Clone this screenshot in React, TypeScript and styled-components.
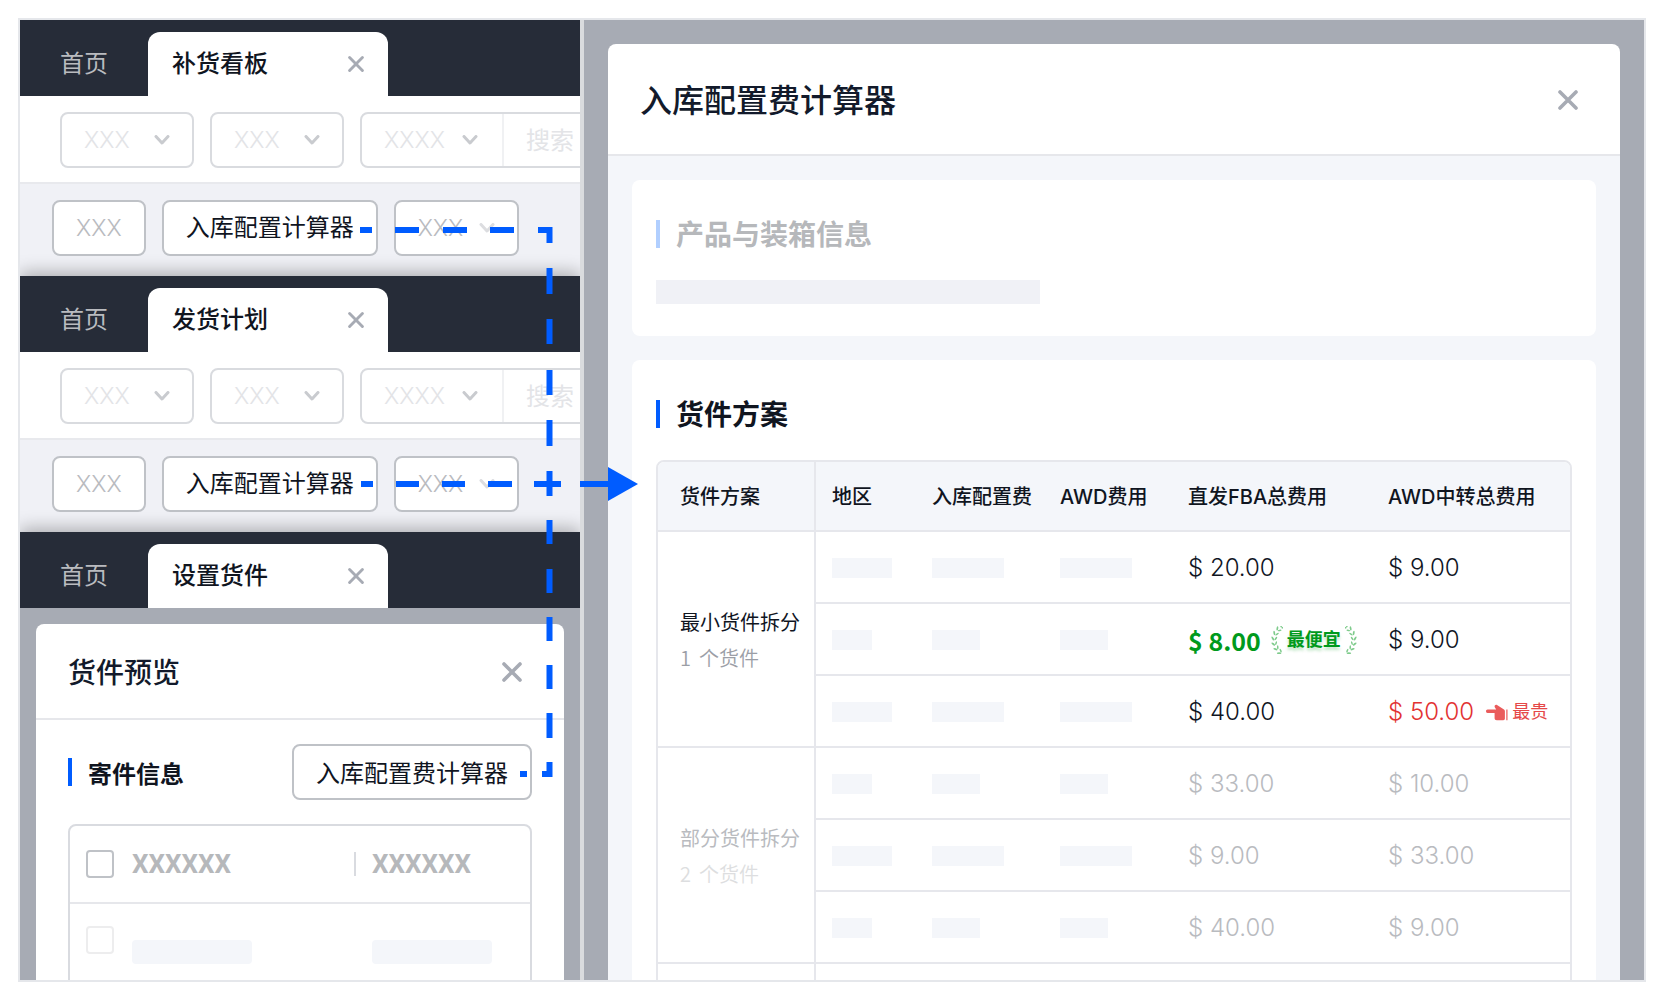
import React from 'react';
import styled, { createGlobalStyle } from 'styled-components';

const cjk = '"Noto Sans CJK SC", sans-serif';
const inter = `Inter, ${cjk}`;
const roboto = `Roboto, ${cjk}`;

const GlobalStyle = createGlobalStyle`
  *, *::before, *::after { box-sizing: border-box; }
  body { margin: 0; background: #fff; color: #10151f; font-family: ${inter}; line-height: 32px; }
  button, input, select { font: inherit; color: inherit; margin: 0; }
  h2, h3, p { margin: 0; }
`;

const Page = styled.div`
  height: 100vh;
  padding: 18px;
`;

const Frame = styled.main`
  position: relative;
  display: flex;
  height: 100%;
  border: 2px solid #e5e7eb;
  overflow: hidden;
`;

const EntryColumn = styled.section`
  display: flex;
  flex: 0 0 560px;
  flex-direction: column;
  overflow: hidden;
`;

const Divider = styled.div`
  flex: 0 0 4px;
  background: #d9dbde;
`;

const Screen = styled.article<{ $fill?: boolean }>`
  display: flex;
  flex: ${(p) => (p.$fill ? '1 0 auto' : 'none')};
  flex-direction: column;
  background: #a7abb4;
  box-shadow: 0 -4px 16px rgba(0, 0, 0, 0.28);
`;

const TabBar = styled.nav`
  display: flex;
  align-items: flex-end;
  height: 76px;
  background: #262c38;
`;

const HomeTab = styled.a`
  width: 128px;
  padding-left: 40px;
  color: #b9bbbf;
  font-size: 24px;
  line-height: 64px;
  text-decoration: none;
`;

const ActiveTab = styled.div`
  display: flex;
  align-items: center;
  justify-content: space-between;
  width: 240px;
  height: 64px;
  padding: 0 24px;
  border-radius: 12px 12px 0 0;
  background: #fff;
  font-size: 24px;
  font-weight: 500;
`;

const IconButton = styled.button`
  display: flex;
  padding: 0;
  border: 0;
  background: none;
  color: #a7abb4;
`;

const FilterBar = styled.div`
  display: flex;
  gap: 16px;
  height: 88px;
  padding: 16px 0 0 40px;
  border-bottom: 2px solid #e8e9ed;
  background: #fff;
  overflow: hidden;
`;

const SelectBox = styled.div<{ $joined?: boolean }>`
  display: flex;
  flex: none;
  align-items: center;
  width: ${(p) => (p.$joined ? 142 : 134)}px;
  height: ${(p) => (p.$joined ? 52 : 56)}px;
  padding-right: ${(p) => (p.$joined ? 24 : 22)}px;
  border: ${(p) => (p.$joined ? '0' : '2px solid #d9dbdf')};
  border-right: ${(p) => (p.$joined ? '2px solid #f0f1f3' : '')};
  border-radius: ${(p) => (p.$joined ? 0 : 8)}px;
  color: #c9cbcf;
`;

const Select = styled.select`
  flex: 1;
  min-width: 0;
  height: 100%;
  padding: 0 0 0 22px;
  border: 0;
  background: none;
  appearance: none;
  color: #e3e4e7;
  font-size: 23px;
  font-weight: 300;
`;

const SearchGroup = styled.div`
  display: flex;
  flex: none;
  width: 320px;
  height: 56px;
  border: 2px solid #d9dbdf;
  border-radius: 8px;
`;

const SearchInput = styled.input`
  width: 160px;
  height: 52px;
  padding: 0 22px;
  border: 0;
  background: none;
  font-size: 24px;
  &::placeholder { color: #e3e4e7; opacity: 1; }
`;

const ActionBar = styled.div`
  display: flex;
  gap: 16px;
  height: 92px;
  padding: 16px 32px 0;
  background: #f0f1f6;
`;

const OutlineButton = styled.button<{ $muted?: boolean }>`
  display: flex;
  flex: none;
  align-items: center;
  gap: 16px;
  height: 56px;
  padding: 0 22px;
  border: 2px solid #bfc2c7;
  border-radius: 8px;
  background: #fff;
  color: ${(p) => (p.$muted ? '#b9bbbf' : '#10151f')};
  font-size: ${(p) => (p.$muted ? 23 : 24)}px;
  font-weight: ${(p) => (p.$muted ? 300 : 400)};
  white-space: nowrap;
  svg { color: #dcdde0; }
`;

const PreviewModal = styled.div`
  flex: 1;
  margin: 16px 16px 0;
  border-radius: 8px 8px 0 0;
  background: #fff;
`;

const ModalHeader = styled.header<{ $large?: boolean }>`
  display: flex;
  align-items: center;
  justify-content: space-between;
  height: ${(p) => (p.$large ? 112 : 96)}px;
  padding: 2px 42px 0 32px;
  border-bottom: 2px solid #e6e7eb;
`;

const ModalTitle = styled.h2<{ $large?: boolean }>`
  padding-top: 2px;
  color: #121a2b;
  font-size: ${(p) => (p.$large ? 32 : 28)}px;
  font-weight: 500;
`;

const PreviewBody = styled.div`
  padding: 24px 32px 0;
  font-family: ${cjk};
`;

const SectionRow = styled.div`
  display: flex;
  align-items: center;
  justify-content: space-between;
  margin-bottom: 24px;
`;

const SectionTitle = styled.h3<{ $size?: number; $muted?: boolean }>`
  height: 28px;
  padding-left: 16px;
  border-left: 4px solid ${(p) => (p.$muted ? '#b1cfff' : '#005cff')};
  color: ${(p) => (p.$muted ? '#b6b8bb' : '#10151f')};
  font-size: ${(p) => p.$size ?? 28}px;
  font-weight: 700;
  line-height: 30px;
`;

const ShipmentTable = styled.div`
  border: 2px solid #d9dbe0;
  border-radius: 8px;
  overflow: hidden;
  table { width: 100%; border-collapse: separate; border-spacing: 0; table-layout: fixed; }
  th, td { padding: 0; text-align: left; }
  th { height: 78px; border-bottom: 2px solid #e6e7eb; color: #b6b8bb; font-family: ${roboto}; font-size: 26px; font-weight: 700; }
  td { height: 96px; vertical-align: top; }
  th:first-child, td:first-child { width: 62px; padding-left: 16px; }
  th:nth-child(2) { width: 222px; }
  td:first-child { padding-top: 22px; }
  td:nth-child(n + 2) { padding-top: 36px; }
  td:last-child { padding-left: 18px; }
`;

const SplitHeading = styled.div`
  height: 24px;
  padding-left: 16px;
  border-left: 2px solid #d9dbe0;
  line-height: 24px;
`;

const Checkbox = styled.input<{ $faint?: boolean }>`
  display: block;
  width: 28px;
  height: 28px;
  border: 2px solid ${(p) => (p.$faint ? '#ededee' : '#bfc2c7')};
  border-radius: 4px;
  background: #fff;
  appearance: none;
`;

const Skeleton = styled.div<{ $w: number; $h?: number; $r?: number; $dark?: boolean }>`
  width: ${(p) => p.$w}px;
  height: ${(p) => p.$h ?? 20}px;
  border-radius: ${(p) => p.$r ?? 0}px;
  background: ${(p) => (p.$dark ? '#f0f1f6' : '#f4f6fa')};
`;

const CalculatorPane = styled.section`
  display: flex;
  flex: 1;
  min-width: 0;
  padding: 24px 24px 0;
  background: #a7abb4;
`;

const Calculator = styled.div`
  flex: 1;
  min-width: 0;
  border-radius: 8px 8px 0 0;
  background: #fff;
`;

const CalculatorBody = styled.div`
  display: flex;
  flex-direction: column;
  gap: 24px;
  padding: 24px;
  background: #f4f6fa;
`;

const Card = styled.section`
  display: flex;
  flex-direction: column;
  gap: 32px;
  padding: 40px 24px 32px;
  border-radius: 8px;
  background: #fff;
`;

const line = '2px solid #e6e7ec';

const PlanTable = styled.div`
  border: ${line};
  border-radius: 8px;
  overflow: hidden;
  table { width: 100%; border-collapse: separate; border-spacing: 0; table-layout: fixed; }
  th, td { height: 72px; padding: 2px 0 0 16px; border-bottom: ${line}; text-align: left; white-space: nowrap; }
  thead th { height: 70px; background: #f4f6fa; font-size: 20px; font-weight: 500; }
  th:first-child { padding-left: 22px; border-right: ${line}; }
  td { font-size: 24px; font-weight: 300; }
`;

const Plan = styled.p<{ $muted: boolean }>`
  color: ${(p) => (p.$muted ? '#b9bbbf' : '#10151f')};
  font-family: ${cjk};
  font-size: 20px;
  font-weight: 400;
  line-height: 36px;
`;

const PlanCount = styled(Plan)`
  display: flex;
  gap: 8px;
  color: ${(p) => (p.$muted ? '#dddee0' : '#9b9ea6')};
  font-weight: 350;
`;

type Tone = 'normal' | 'muted' | 'best' | 'worst';
const tones: Record<Tone, string> = { normal: '#10151f', muted: '#b9bbbf', best: '#009a1c', worst: '#e23232' };

const Price = styled.div<{ $tone: Tone }>`
  display: flex;
  align-items: center;
  gap: ${(p) => (p.$tone === 'best' ? 10 : 12)}px;
  color: ${(p) => tones[p.$tone]};
  font-family: ${(p) => (p.$tone === 'best' ? cjk : inter)};
  font-size: ${(p) => (p.$tone === 'best' ? 25 : 24)}px;
  font-weight: ${(p) => (p.$tone === 'best' ? 700 : 300)};
`;

const BestTag = styled.span`
  display: flex;
  align-items: center;
  gap: 4px;
  font-family: ${inter};
  font-size: 18px;
  font-weight: 700;
  text-shadow: 0 3px 3px rgba(0, 154, 28, 0.25);
`;

const WorstTag = styled.span`
  display: flex;
  align-items: center;
  gap: 4px;
  color: #e54848;
  font-size: 18px;
  font-weight: 400;
`;

const Connector = styled.svg`
  position: absolute;
  top: 0;
  left: 0;
  pointer-events: none;
`;

function CloseIcon({ size }: { size: number }) {
  return (
    <svg width={size} height={size} viewBox="0 0 20 20" fill="none" stroke="currentColor" strokeWidth={3.6} strokeLinecap="round">
      <path d="M2 2 18 18M18 2 2 18" />
    </svg>
  );
}

function Chevron() {
  return (
    <svg width="16" height="10" viewBox="0 0 16 10" fill="none" stroke="currentColor" strokeWidth="3" strokeLinecap="round" strokeLinejoin="round">
      <path d="M2 1.5 8 8 14 1.5" />
    </svg>
  );
}

const leafAngles = [-62, -42, -22, -2, 18, 38, 58];

function Laurel({ flip }: { flip?: boolean }) {
  return (
    <svg width="12" height="28" viewBox="0 0 12 28" fill="#7fcb8c">
      <g transform={flip ? 'matrix(-1 0 0 1 12 0)' : undefined}>
        {leafAngles.map((a) => {
          const r = (a * Math.PI) / 180;
          const x = 17 - 13.5 * Math.cos(r);
          const y = 14 + 14.5 * Math.sin(r);
          return (
            <g key={a} transform={`translate(${x} ${y}) rotate(${-a})`}>
              <ellipse cx="-1.7" cy="-1" rx="0.9" ry="2.2" transform="rotate(-32 -1.7 -1)" />
              <ellipse cx="1.3" cy="-1" rx="0.8" ry="2" transform="rotate(35 1.3 -1)" />
            </g>
          );
        })}
      </g>
    </svg>
  );
}

function HandIcon() {
  return (
    <svg width="22" height="17" viewBox="0 0 22 17" fill="#ea5b5b">
      <path d="M1.6 5.6h8.6L8.8 3.2C8 1.7 9.5 0 11 1l7 4.6c.6.4.9.9.9 1.5v7.5c0 1-.6 1.6-1.6 1.6h-6.5c-1.4 0-2.2-.7-2.2-1.9V9H1.6C-.5 9-.5 5.6 1.6 5.6Z" />
      <path d="M20.3 5.4h1.2v10.8h-1.2z" />
    </svg>
  );
}

function TabHeader({ title }: { title: string }) {
  return (
    <TabBar>
      <HomeTab href="#home">首页</HomeTab>
      <ActiveTab>
        {title}
        <IconButton aria-label={`关闭${title}`}><CloseIcon size={16} /></IconButton>
      </ActiveTab>
    </TabBar>
  );
}

function FilterSelect({ text, joined }: { text: string; joined?: boolean }) {
  return (
    <SelectBox $joined={joined}>
      <Select aria-label={text}><option>{text}</option></Select>
      <Chevron />
    </SelectBox>
  );
}

function ListScreen({ title }: { title: string }) {
  return (
    <Screen>
      <TabHeader title={title} />
      <FilterBar>
        <FilterSelect text="XXX" />
        <FilterSelect text="XXX" />
        <SearchGroup>
          <FilterSelect text="XXXX" joined />
          <SearchInput aria-label="搜索" placeholder="搜索" />
        </SearchGroup>
      </FilterBar>
      <ActionBar>
        <OutlineButton $muted>XXX</OutlineButton>
        <OutlineButton>入库配置计算器</OutlineButton>
        <OutlineButton $muted>XXX<Chevron /></OutlineButton>
      </ActionBar>
    </Screen>
  );
}

function ShipmentScreen() {
  return (
    <Screen $fill>
      <TabHeader title="设置货件" />
      <PreviewModal>
        <ModalHeader>
          <ModalTitle>货件预览</ModalTitle>
          <IconButton aria-label="关闭"><CloseIcon size={20} /></IconButton>
        </ModalHeader>
        <PreviewBody>
          <SectionRow>
            <SectionTitle $size={24}>寄件信息</SectionTitle>
            <OutlineButton>入库配置费计算器</OutlineButton>
          </SectionRow>
          <ShipmentTable>
            <table>
              <thead>
                <tr>
                  <th><Checkbox type="checkbox" aria-label="全选" /></th>
                  <th>XXXXXX</th>
                  <th><SplitHeading>XXXXXX</SplitHeading></th>
                </tr>
              </thead>
              <tbody>
                <tr>
                  <td><Checkbox type="checkbox" aria-label="选择" $faint /></td>
                  <td><Skeleton $w={120} $h={24} $r={4} /></td>
                  <td><Skeleton $w={120} $h={24} $r={4} /></td>
                </tr>
              </tbody>
            </table>
          </ShipmentTable>
        </PreviewBody>
      </PreviewModal>
    </Screen>
  );
}

interface PlanRow { wide: boolean; fba: string; awd: string; best?: boolean; worst?: boolean }
interface PlanGroup { name: string; count: number; muted: boolean; rows: PlanRow[] }

const groups: PlanGroup[] = [
  {
    name: '最小货件拆分', count: 1, muted: false,
    rows: [
      { wide: true, fba: '$ 20.00', awd: '$ 9.00' },
      { wide: false, fba: '$ 8.00', awd: '$ 9.00', best: true },
      { wide: true, fba: '$ 40.00', awd: '$ 50.00', worst: true },
    ],
  },
  {
    name: '部分货件拆分', count: 2, muted: true,
    rows: [
      { wide: false, fba: '$ 33.00', awd: '$ 10.00' },
      { wide: true, fba: '$ 9.00', awd: '$ 33.00' },
      { wide: false, fba: '$ 40.00', awd: '$ 9.00' },
    ],
  },
];

function PlanRows({ group }: { group: PlanGroup }) {
  const base: Tone = group.muted ? 'muted' : 'normal';
  return (
    <tbody>
      {group.rows.map((row, i) => (
        <tr key={i}>
          {i === 0 && (
            <th scope="rowgroup" rowSpan={3}>
              <Plan $muted={group.muted}>{group.name}</Plan>
              <PlanCount $muted={group.muted}><span>{group.count}</span> <span>个货件</span></PlanCount>
            </th>
          )}
          <td><Skeleton $w={row.wide ? 60 : 40} /></td>
          <td><Skeleton $w={row.wide ? 72 : 48} /></td>
          <td><Skeleton $w={row.wide ? 72 : 48} /></td>
          <td>
            <Price $tone={row.best ? 'best' : base}>
              {row.fba}
              {row.best && <BestTag><Laurel />最便宜<Laurel flip /></BestTag>}
            </Price>
          </td>
          <td>
            <Price $tone={row.worst ? 'worst' : base}>
              {row.awd}
              {row.worst && <WorstTag><HandIcon />最贵</WorstTag>}
            </Price>
          </td>
        </tr>
      ))}
    </tbody>
  );
}

function FlowConnector() {
  return (
    <Connector width="640" height="780" fill="none" stroke="#005cff" strokeWidth="6" aria-hidden="true">
      <path d="M340 210h12M375 210h24M423 210h24M470 210h24M518 210h11.5v13" />
      <path d="M529.5 248v26M529.5 299v25M529.5 350v25M529.5 400v26M529.5 451v25M529.5 500v24M529.5 549v24M529.5 597v24M529.5 645v24M529.5 693v25M529.5 742v12h-7.5M507 754h-7" />
      <path d="M341 464h12M376 464h23M422 464h23M468 464h24M514 464h27M560 464h28" />
      <path d="M588 447 618 464 588 481Z" fill="#005cff" stroke="none" />
    </Connector>
  );
}

export default function App() {
  return (
    <>
      <GlobalStyle />
      <Page>
        <Frame>
          <EntryColumn>
            <ListScreen title="补货看板" />
            <ListScreen title="发货计划" />
            <ShipmentScreen />
          </EntryColumn>
          <Divider />
          <CalculatorPane>
            <Calculator>
              <ModalHeader $large>
                <ModalTitle $large>入库配置费计算器</ModalTitle>
                <IconButton aria-label="关闭"><CloseIcon size={20} /></IconButton>
              </ModalHeader>
              <CalculatorBody>
                <Card>
                  <SectionTitle $muted>产品与装箱信息</SectionTitle>
                  <Skeleton $w={384} $h={24} $dark />
                </Card>
                <Card>
                  <SectionTitle>货件方案</SectionTitle>
                  <PlanTable>
                    <table>
                      <colgroup>
                        <col width="158" /><col width="100" /><col width="128" /><col width="128" /><col width="200" /><col />
                      </colgroup>
                      <thead>
                        <tr>
                          <th>货件方案</th><th>地区</th><th>入库配置费</th><th>AWD费用</th><th>直发FBA总费用</th><th>AWD中转总费用</th>
                        </tr>
                      </thead>
                      {groups.map((g) => <PlanRows key={g.name} group={g} />)}
                      <tbody>
                        <tr><th scope="row" /><td colSpan={5} /></tr>
                      </tbody>
                    </table>
                  </PlanTable>
                </Card>
              </CalculatorBody>
            </Calculator>
          </CalculatorPane>
          <FlowConnector />
        </Frame>
      </Page>
    </>
  );
}
